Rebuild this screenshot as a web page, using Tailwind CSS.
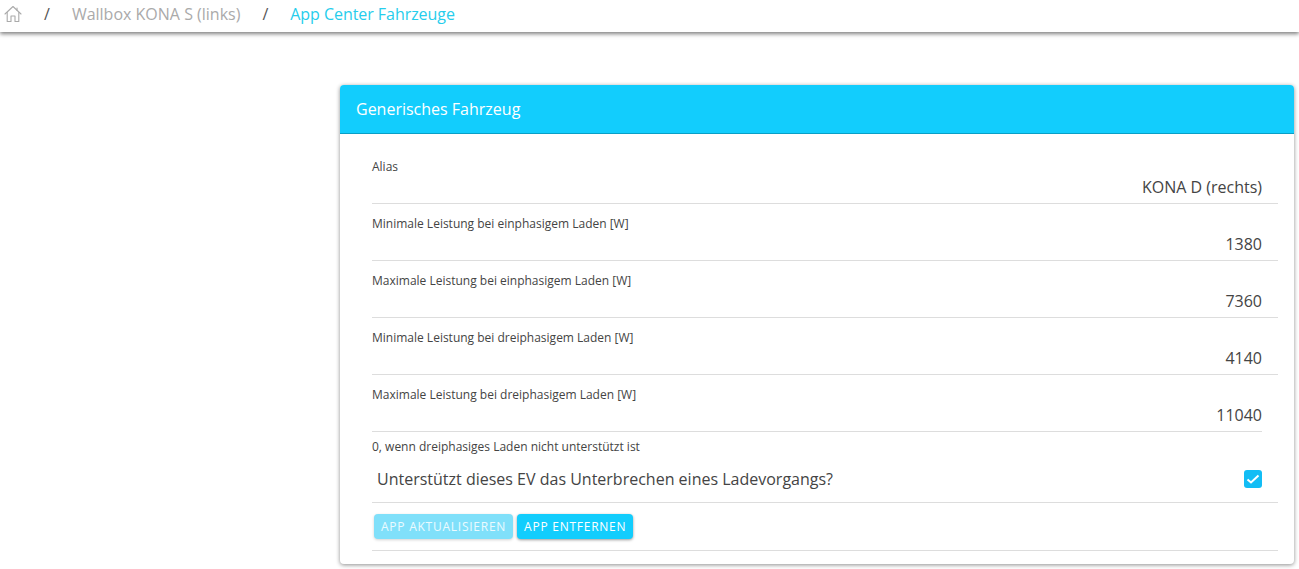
<!DOCTYPE html>
<html lang="de">
<head>
<meta charset="utf-8">
<script src="https://cdn.jsdelivr.net/npm/@tailwindcss/browser@4"></script>
</head>
<body class="bg-white font-['Open_Sans',sans-serif] text-[#444] overflow-hidden">
<div class="h-[569px] w-[1299px] overflow-hidden">
  <nav class="h-[32px] bg-white shadow-[0_2px_4px_rgba(0,0,0,0.5)] flex items-center text-[16px] leading-[28px] pb-[4px]">
    <svg class="ml-[4px] w-[18px] h-[18px] text-[#aaa]" viewBox="0 0 18 18" fill="none" stroke="currentColor" stroke-width="1.1" stroke-linejoin="round" stroke-linecap="round"><path d="M1 9 L9 1.5 L17 9"/><path d="M3.2 7.5 V16.5 H7 V11 H11 V16.5 H14.8 V7.5"/><path d="M13 3 V5.2"/></svg>
    <span class="ml-[22px] text-[#555]">/</span>
    <span class="ml-[22px] text-[#aaa]">Wallbox KONA S (links)</span>
    <span class="ml-[22px] text-[#555]">/</span>
    <span class="ml-[22px] text-[#26cdec] tracking-[-0.05px]">App Center Fahrzeuge</span>
  </nav>
  <main class="ml-[340px] mt-[53px] w-[954px] h-[479px] bg-white rounded-[4px] shadow-[0_1px_4px_rgba(0,0,0,0.45)] overflow-hidden">
    <header class="h-[49px] bg-[#12cdfd] border-b border-b-[#0a9fc6] pl-[16px] flex items-center text-white text-[16px]">Generisches Fahrzeug</header>
    <div class="pl-[32px] pr-[16px]">
      <div class="h-[70px] pt-[25px] border-b border-[#ddd] flex flex-col">
        <label class="text-[12px] leading-[16px] text-[#444]">Alias</label>
        <div class="text-right pr-[16px] text-[16px] leading-[24px]">KONA D (rechts)</div>
      </div>
      <div class="h-[57px] pt-[12px] border-b border-[#ddd] flex flex-col">
        <label class="text-[12px] leading-[16px]">Minimale Leistung bei einphasigem Laden [W]</label>
        <div class="text-right pr-[16px] text-[16px] leading-[24px]">1380</div>
      </div>
      <div class="h-[57px] pt-[12px] border-b border-[#ddd] flex flex-col">
        <label class="text-[12px] leading-[16px]">Maximale Leistung bei einphasigem Laden [W]</label>
        <div class="text-right pr-[16px] text-[16px] leading-[24px]">7360</div>
      </div>
      <div class="h-[57px] pt-[12px] border-b border-[#ddd] flex flex-col">
        <label class="text-[12px] leading-[16px]">Minimale Leistung bei dreiphasigem Laden [W]</label>
        <div class="text-right pr-[16px] text-[16px] leading-[24px]">4140</div>
      </div>
      <div class="h-[57px] pt-[12px] mr-[16px] border-b border-[#ddd] flex flex-col">
        <label class="text-[12px] leading-[16px]">Maximale Leistung bei dreiphasigem Laden [W]</label>
        <div class="text-right text-[16px] leading-[24px]">11040</div>
      </div>
      <p class="text-[12px] leading-[16px] mt-[7px]">0, wenn dreiphasiges Laden nicht unterstützt ist</p>
      <div class="h-[48px] border-b border-[#ddd] flex items-center justify-between pl-[5px] pr-[16px] text-[16px]">
        <span>Unterstützt dieses EV das Unterbrechen eines Ladevorgangs?</span>
        <span class="w-[18px] h-[18px] rounded-[3px] bg-[#12bdf5] flex items-center justify-center">
          <svg class="w-[14px] h-[14px]" viewBox="0 0 14 14" fill="none" stroke="white" stroke-width="2"><path d="M1.5 7.5 L5 10.5 L12.5 3.5"/></svg>
        </span>
      </div>
      <div class="h-[48px] border-b border-[#ddd] flex items-center pl-[2px] gap-[4px]">
        <button class="h-[25px] px-[7px] rounded-[4px] bg-[#80e0fa] text-white/85 text-[12px] tracking-[0.75px] shadow-[0_1px_3px_rgba(0,0,0,0.18)]">APP AKTUALISIEREN</button>
        <button class="h-[25px] px-[7px] rounded-[4px] bg-[#12cdfd] text-white text-[12px] tracking-[0.75px] shadow-[0_1px_3px_rgba(0,0,0,0.4)]">APP ENTFERNEN</button>
      </div>
    </div>
  </main>
</div>
</body>
</html>
